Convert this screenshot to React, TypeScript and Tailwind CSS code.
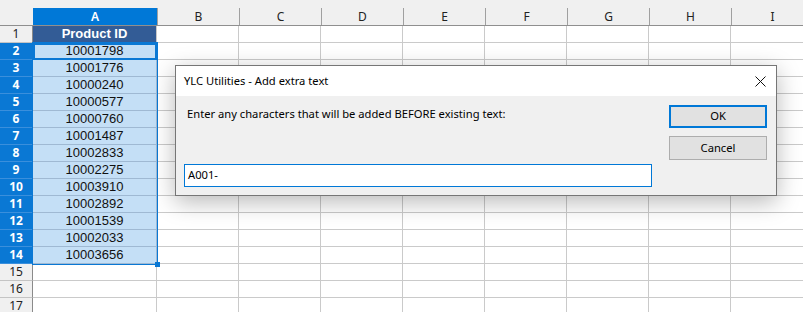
import React from "react";

const COLS = ["B", "C", "D", "E", "F", "G", "H", "I"];
const IDS = [
  "10001798", "10001776", "10000240", "10000577", "10000760", "10001487", "10002833",
  "10002275", "10003910", "10002892", "10001539", "10002033", "10003656",
];

const ui = { fontFamily: '"Noto Sans", "Open Sans", sans-serif' };
const cellFont = { fontFamily: '"Liberation Sans", Arial, sans-serif' };

function Row({ n }: { n: number }) {
  const selected = n >= 2 && n <= 14;
  const value = n === 1 ? "Product ID" : selected ? IDS[n - 2] : "";
  return (
    <div className="flex h-[17px] shrink-0">
      <div
        style={ui}
        className={
          selected
            ? "w-[33px] shrink-0 flex items-center justify-center border-r border-b border-r-[#0a5fb0] border-b-[#3a8fdc] bg-[#0a78d4] text-[12px] font-bold text-white"
            : "w-[33px] shrink-0 flex items-center justify-center border-r border-b border-r-[#8a8a8a] border-b-[#c4c4c4] bg-[#f0f0f0] text-[12px] text-[#222]"
        }
      >
        {n}
      </div>
      <div
        style={cellFont}
        className={
          n === 1
            ? "w-[124px] shrink-0 flex items-center justify-center border-r border-b border-[#c8c8c8] bg-[#335c96] text-[13px] font-bold text-white"
            : selected
            ? "w-[124px] shrink-0 flex items-center justify-center border-r border-b border-[#9fb9d3] bg-[#c4dff6] text-[13px] text-[#111]"
            : "w-[124px] shrink-0 border-r border-b border-[#cacaca] bg-white"
        }
      >
        {value}
      </div>
      {COLS.map((c) => (
        <div key={c} className="w-[82px] shrink-0 border-r border-b border-[#cacaca] bg-white" />
      ))}
    </div>
  );
}

export default function App() {
  const rows = Array.from({ length: 17 }, (_, i) => i + 1);
  return (
    <div className="relative w-[803px] h-[312px] overflow-hidden bg-white">
      {/* column header */}
      <div style={ui} className="flex h-[26px] pt-[8px] bg-[#f0f0f0] border-b border-[#8f8f8f] text-[12px]">
        <div className="w-[33px] shrink-0" />
        <div className="w-[124px] shrink-0 flex items-center justify-center bg-[#0078d7] text-white font-semibold">A</div>
        {COLS.map((c) => (
          <div key={c} className="w-[82px] shrink-0 flex items-center justify-center border-l border-[#a0a0a0] text-[#222]">
            {c}
          </div>
        ))}
      </div>

      {rows.map((n) => (
        <Row key={n} n={n} />
      ))}

      {/* selection overlay */}
      <div className="pointer-events-none absolute left-[32px] top-[42px] w-[126px] h-[223px] border border-[#0a78d4]" />
      <div className="pointer-events-none absolute left-[33px] top-[43px] w-[124px] h-[17px] border-2 border-[#0a78d4]" />
      <div className="pointer-events-none absolute left-[155px] top-[262px] w-[5px] h-[5px] bg-[#0a78d4]" />

      {/* dialog */}
      <div
        style={ui}
        className="absolute left-[175px] top-[65px] w-[602px] h-[131px] flex flex-col border border-[#767676] bg-[#f0f0f0] shadow-[0_6px_22px_rgba(0,0,0,0.28)] text-[11.2px] text-black"
      >
        <div className="flex h-[30px] items-center justify-between bg-white pl-[8px] pr-[10px]">
          <span>YLC Utilities - Add extra text</span>
          <svg width="11" height="11" viewBox="0 0 11 11">
            <path d="M0.5 0.5 L10.5 10.5 M10.5 0.5 L0.5 10.5" stroke="#111" strokeWidth="1" fill="none" />
          </svg>
        </div>
        <div className="flex flex-1">
          <div className="flex w-[476px] flex-col pl-[8px] pt-[9px]">
            <div className="h-[17px] pl-[3px] leading-[17px]">
              Enter any characters that will be added BEFORE existing text:
            </div>
            <div className="mt-auto mb-[8px] flex h-[23px] w-[468px] items-center border border-[#0078d7] bg-white pl-[3px]">
              A001-
            </div>
          </div>
          <div className="ml-[17px] flex flex-col gap-[8px] pt-[9px]">
            <button className="flex h-[23px] w-[98px] items-center justify-center border-2 border-[#0078d7] bg-[#e1e1e1]">
              OK
            </button>
            <button className="flex h-[24px] w-[98px] items-center justify-center border border-[#adadad] bg-[#e1e1e1]">
              Cancel
            </button>
          </div>
        </div>
      </div>
    </div>
  );
}
